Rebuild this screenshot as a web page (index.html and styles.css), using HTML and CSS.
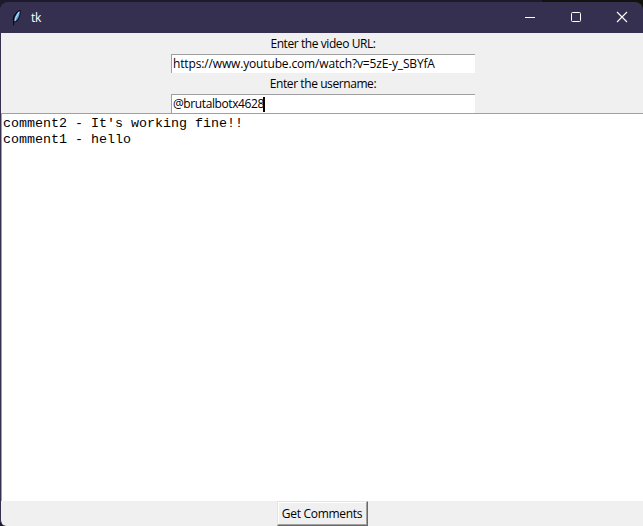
FILE: index.html
```
<!DOCTYPE html>
<html lang="en">
<head>
<meta charset="utf-8">
<title>tk</title>
<link rel="stylesheet" href="styles.css">
</head>
<body>
<div class="window">
  <header class="titlebar">
    <svg class="feather" width="12" height="18" viewBox="0 0 12 18"><path d="M2.2 16.5 2 12Q1 8 4 5Q6 1.5 9.5 1Q10.3 5 8.2 9Q6.5 13 3.3 13.5L3 16.5Z" fill="#08090f"/><path d="M3.3 11.5Q3 8 5.5 5Q7 2.5 8.8 2Q9 6 7 9.5Q5.5 12 3.3 12.5Z" fill="#5b9edb"/><path d="M4 11.5 5 8.5 8.1 3" fill="none" stroke="#d5ecff" stroke-width=".9"/></svg>
    <span class="title">tk</span>
    <div class="controls">
      <svg width="46" height="31" viewBox="0 0 46 31"><path d="M18 15.5h10" stroke="#fff"/></svg>
      <svg width="46" height="31" viewBox="0 0 46 31"><rect x="18.5" y="10.5" width="9" height="9" rx="1" fill="none" stroke="#fff"/></svg>
      <svg width="46" height="31" viewBox="0 0 46 31"><path d="M18 10l10 10M28 10l-10 10" stroke="#fff" stroke-width="1.1"/></svg>
    </div>
  </header>
  <main class="content">
    <div class="form">
      <div class="label"><span class="t-label">Enter the video URL:</span></div>
      <div class="entry"><span class="t-url">https://www.youtube.com/watch?v=5zE-y_SBYfA</span></div>
      <div class="label"><span class="t-label">Enter the username:</span></div>
      <div class="entry"><span class="t-user">@brutalbotx4628</span><i class="caret"></i></div>
    </div>
    <div class="comments"><div>comment2 - It's working fine!!</div><div>comment1 - hello</div></div>
    <div class="footer"><button class="btn"><span class="t-btn">Get Comments</span></button></div>
  </main>
</div>
</body>
</html>
```
FILE: styles.css
```
* { box-sizing: border-box; }
body {
  margin: 0;
  height: 526px;
  overflow: hidden;
  background: linear-gradient(90deg, #1d1b2b 542px, #12120f 542px);
  font-family: "Open Sans", "Noto Sans", sans-serif;
  font-size: 12px;
  color: #000;
}
.window {
  height: 526px;
  padding-top: 2px;
  display: flex;
  flex-direction: column;
}
.titlebar {
  height: 31px;
  flex: none;
  display: flex;
  align-items: center;
  padding-left: 11px;
  background: #353050;
  color: #fff;
  border-radius: 8px 8px 0 0;
}
.title { margin-left: 8px; letter-spacing: -0.3px; }
.controls { display: flex; margin-left: auto; margin-right: -2px; }
.content {
  flex: 1;
  display: flex;
  flex-direction: column;
  align-items: center;
  background: #f0f0f0;
  border-left: 1px solid #353050;
  border-bottom-left-radius: 6px;
  overflow: hidden;
}
.form {
  width: 304px;
  height: 80px;
  flex: none;
  margin-left: 2px;
}
.label {
  height: 21px;
  line-height: 22px;
  text-align: center;
  white-space: nowrap;
}
.entry {
  height: 19px;
  display: flex;
  align-items: center;
  line-height: 16px;
  padding-left: 1px;
  background: #fff;
  border-top: 1px solid #a0a0a0;
  border-left: 1px solid #a0a0a0;
  white-space: nowrap;
}
.caret { width: 2px; height: 15px; margin-left: -1px; background: #000; }
.t-label { letter-spacing: -0.42px; }
.t-url { letter-spacing: -0.15px; }
.t-user { letter-spacing: -0.4px; }
.t-btn { letter-spacing: -0.3px; }
.comments {
  width: 100%;
  height: 388px;
  flex: none;
  padding: 2px 1px;
  background: #fff;
  border-top: 1px solid #a0a0a0;
  border-left: 1px solid #a0a0a0;
  font: 13.33px/16px "Liberation Mono", monospace;
  white-space: pre;
}
.footer { height: 25px; display: flex; }
.btn {
  width: 91px;
  height: 25px;
  padding: 0;
  background: #f0f0f0;
  border: solid;
  border-width: 1px 1px 1px 1px;
  border-color: #e3e3e3 #696969 #696969 #e3e3e3;
  box-shadow: inset -1px -1px #a0a0a0, inset 1px 1px #fff;
  font: inherit;
  color: #000;
  white-space: nowrap;
}
```
